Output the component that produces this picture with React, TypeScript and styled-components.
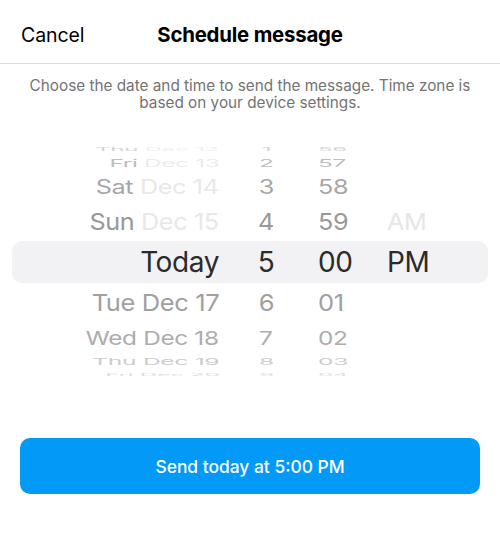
import React from 'react';
import styled, { createGlobalStyle } from 'styled-components';

const GlobalStyle = createGlobalStyle`
  html, body {
    margin: 0;
    padding: 0;
    background: #ffffff;
  }
  body {
    font-family: "Inter", "Roboto", "Liberation Sans", sans-serif;
    -webkit-font-smoothing: antialiased;
  }
`;

const Sheet = styled.div`
  width: 500px;
  height: 536px;
  display: flex;
  flex-direction: column;
  background: #ffffff;
`;

const Header = styled.div`
  height: 64px;
  display: grid;
  grid-template-columns: 1fr auto 1fr;
  align-items: center;
  padding: 0 21px;
  border-bottom: 1px solid #dbdbdb;
  box-sizing: border-box;
`;

const CancelButton = styled.div`
  font-size: 19.5px;
  color: #000000;
  letter-spacing: -0.1px;
  padding-top: 6px;
`;

const Title = styled.div`
  font-size: 20.4px;
  font-weight: 700;
  color: #000000;
  letter-spacing: -0.2px;
  padding-top: 6px;
`;

const Description = styled.p`
  margin: 0;
  padding: 13px 20px 0;
  font-size: 15.3px;
  line-height: 17px;
  color: #737373;
  text-align: center;
`;

const Wheel = styled.div`
  margin-top: 33px;
  padding: 0 12px;
  display: flex;
  flex-direction: column;
`;

const WheelRow = styled.div<{ $height: number; $selected?: boolean }>`
  height: ${(p) => p.$height}px;
  display: grid;
  grid-template-columns: 207px 94px 69px 1fr;
  grid-template-rows: ${(p) => p.$height}px;
  align-items: center;
  border-radius: 10px;
  background: ${(p) => (p.$selected ? '#f2f2f4' : 'transparent')};
`;

const Cell = styled.div<{ $align: 'left' | 'center' | 'right'; $pad?: number }>`
  height: ${(p) => 'auto'};
  min-height: 0;
  align-self: stretch;
  display: flex;
  align-items: center;
  justify-content: ${(p) =>
    p.$align === 'left' ? 'flex-start' : p.$align === 'right' ? 'flex-end' : 'center'};
  padding-left: ${(p) => p.$pad ?? 0}px;
  overflow: visible;
`;

const WheelText = styled.span<{
  $scale: number;
  $squeeze: number;
  $color: string;
  $origin: string;
}>`
  display: inline-block;
  flex-shrink: 0;
  font-size: 28px;
  line-height: 34px;
  height: 34px;
  letter-spacing: -0.4px;
  white-space: pre;
  color: ${(p) => p.$color};
  transform: scale(${(p) => p.$squeeze}, ${(p) => p.$scale});
  transform-origin: ${(p) => p.$origin} center;
`;

const Dim = styled.span<{ $color: string }>`
  color: ${(p) => p.$color};
`;

const Spacer = styled.div`
  flex: 1;
`;

const SendButton = styled.button`
  margin: 0 20px 42px;
  height: 56px;
  border: none;
  border-radius: 10px;
  background: #0399f7;
  color: #ffffff;
  font-family: inherit;
  font-size: 17.4px;
  font-weight: 500;
  cursor: pointer;
`;

type Row = {
  day: string;
  date: string;
  hour: string;
  minute: string;
  period?: string;
  height: number;
  scale: number;
  squeeze: number;
  color: string;
  dateColor?: string;
  periodColor?: string;
  selected?: boolean;
};

const rows: Row[] = [
  { day: 'Thu', date: 'Dec 12', hour: '1', minute: '56', height: 9, scale: 0.18, squeeze: 0.86, color: '#d4d4d4', dateColor: '#efefef' },
  { day: 'Fri', date: 'Dec 13', hour: '2', minute: '57', height: 19, scale: 0.38, squeeze: 0.87, color: '#bdbdbd', dateColor: '#ececec' },
  { day: 'Sat', date: 'Dec 14', hour: '3', minute: '58', height: 30, scale: 0.7, squeeze: 0.9, color: '#a6a6a6', dateColor: '#e8e8e8' },
  { day: 'Sun', date: 'Dec 15', hour: '4', minute: '59', period: 'AM', height: 39, scale: 0.84, squeeze: 0.9, color: '#999999', dateColor: '#e8e8e8', periodColor: '#e6e6e6' },
  { day: 'Today', date: '', hour: '5', minute: '00', period: 'PM', height: 42, scale: 1, squeeze: 1, color: '#2b2b2b', selected: true },
  { day: 'Tue', date: 'Dec 17', hour: '6', minute: '01', height: 40, scale: 0.83, squeeze: 0.91, color: '#a0a0a0' },
  { day: 'Wed', date: 'Dec 18', hour: '7', minute: '02', height: 29, scale: 0.68, squeeze: 0.87, color: '#adadad' },
  { day: 'Thu', date: 'Dec 19', hour: '8', minute: '03', height: 20, scale: 0.34, squeeze: 0.88, color: '#cccccc' },
  { day: 'Fri', date: 'Dec 20', hour: '9', minute: '04', height: 6, scale: 0.12, squeeze: 0.86, color: '#dddddd' },
];

function PickerRow({ row }: { row: Row }) {
  return (
    <WheelRow $height={row.height} $selected={row.selected}>
      <Cell $align="right">
        <WheelText $scale={row.scale} $squeeze={row.squeeze} $origin="right" $color={row.color}>
          {row.day}
          {row.date && (
            <Dim $color={row.dateColor ?? row.color}>{' ' + row.date}</Dim>
          )}
        </WheelText>
      </Cell>
      <Cell $align="center">
        <WheelText $scale={row.scale} $squeeze={row.squeeze} $origin="center" $color={row.color}>
          {row.hour}
        </WheelText>
      </Cell>
      <Cell $align="left" $pad={5}>
        <WheelText $scale={row.scale} $squeeze={row.squeeze} $origin="left" $color={row.color}>
          {row.minute}
        </WheelText>
      </Cell>
      <Cell $align="left" $pad={5}>
        {row.period && (
          <WheelText
            $scale={row.scale}
            $squeeze={row.squeeze}
            $origin="left"
            $color={row.periodColor ?? row.color}
          >
            {row.period}
          </WheelText>
        )}
      </Cell>
    </WheelRow>
  );
}

export default function App() {
  return (
    <>
      <GlobalStyle />
      <Sheet>
        <Header>
          <CancelButton>Cancel</CancelButton>
          <Title>Schedule message</Title>
          <div />
        </Header>
        <Description>
          Choose the date and time to send the message. Time zone is based on your device settings.
        </Description>
        <Wheel>
          {rows.map((row, i) => (
            <PickerRow key={i} row={row} />
          ))}
        </Wheel>
        <Spacer />
        <SendButton>Send today at 5:00 PM</SendButton>
      </Sheet>
    </>
  );
}
